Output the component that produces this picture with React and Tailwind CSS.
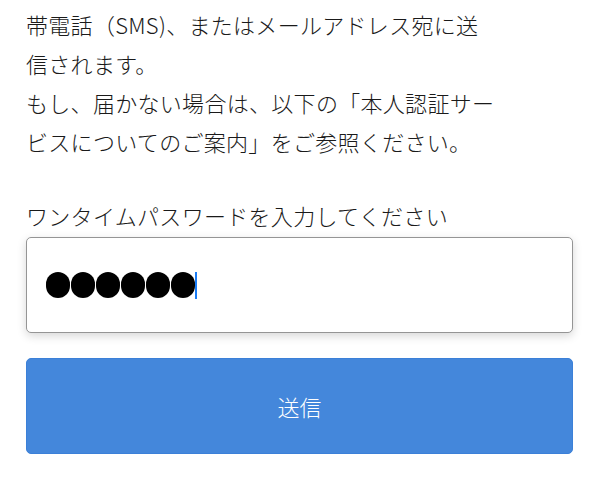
import React from 'react';

const font = { fontFamily: '"Noto Sans CJK JP", "Noto Sans", sans-serif' };

export default function App() {
  const dots = [0, 1, 2, 3, 4, 5];

  return (
    <div className="w-[600px] h-[478px] bg-white overflow-hidden" style={font}>
      <div className="pl-[26px] pr-[27px] pt-[5px]">
        {/* Notice */}
        <p className="text-[22px] leading-[39px] font-light text-[#1a1a1a] whitespace-nowrap tracking-[0.3px]">
          帯電話（SMS)、またはメールアドレス宛に送
          <br />
          信されます。
          <br />
          もし、届かない場合は、以下の「本人認証サー
          <br />
          ビスについてのご案内」をご参照ください。
        </p>

        {/* One-time password */}
        <label className="block mt-[35px] text-[22px] leading-[39px] font-light text-[#1a1a1a] tracking-[0.3px]">
          ワンタイムパスワードを入力してください
        </label>
        <div className="mt-[2px] h-[96px] flex items-center pl-[19px] border-[1.5px] border-[#959595] rounded-[5px] bg-white shadow-[0_3px_10px_rgba(0,0,0,0.16)]">
          <div className="flex items-center gap-[1px]">
            {dots.map((d) => (
              <span key={d} className="block w-[24px] h-[26px] rounded-full bg-black" />
            ))}
          </div>
          <span className="block w-[2px] h-[27px] bg-[#1a7cf5]" />
        </div>

        <button className="mt-[25px] w-full h-[96px] rounded-[5px] bg-[#4487db] border border-[#3b80d8] text-white text-[22px] font-light flex items-center justify-center">
          送信
        </button>
      </div>
    </div>
  );
}
